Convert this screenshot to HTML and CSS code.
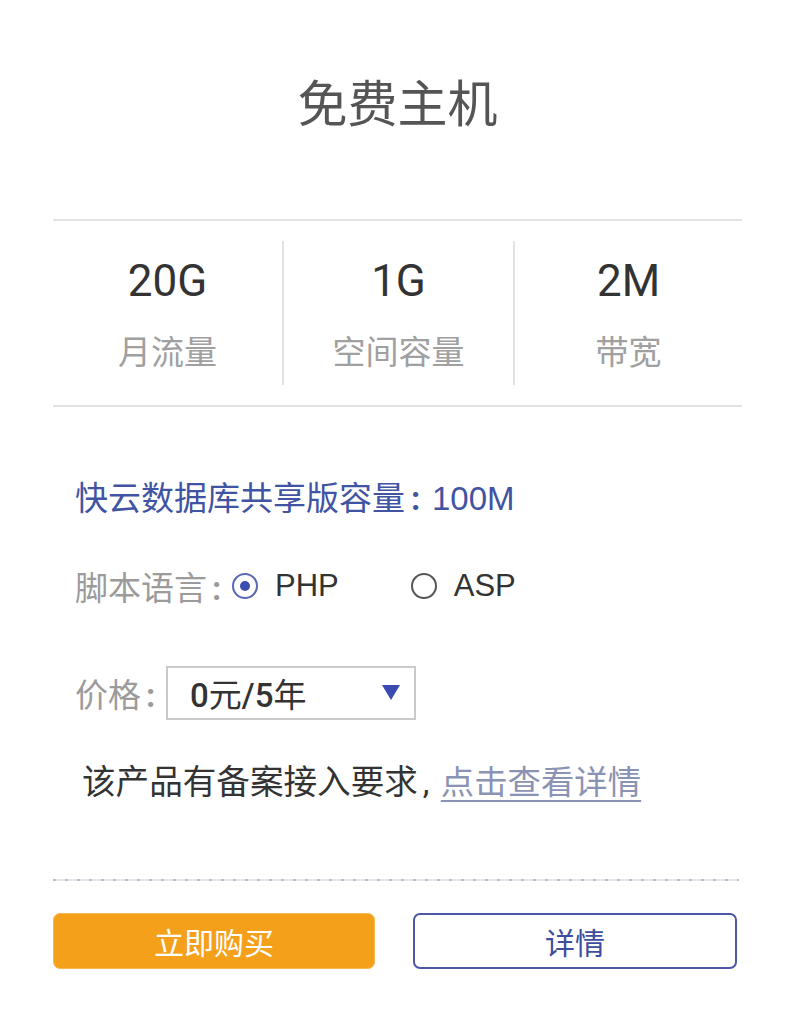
FILE: index.html
```html
<!DOCTYPE html>
<html lang="zh-CN">
<head>
<meta charset="utf-8">
<title>免费主机</title>
<link rel="stylesheet" href="styles.css">
</head>
<body>
<div class="card">
  <h1 class="title">免费主机</h1>
  <div class="stats">
    <div class="stat">
      <div class="stat-value">20G</div>
      <div class="stat-label">月流量</div>
    </div>
    <div class="stat">
      <div class="stat-value">1G</div>
      <div class="stat-label">空间容量</div>
    </div>
    <div class="stat">
      <div class="stat-value">2M</div>
      <div class="stat-label">带宽</div>
    </div>
  </div>
  <div class="db">快云数据库共享版容量<span class="colon">:</span><span class="latin">100M</span></div>
  <div class="row script-row">
    <span class="label">脚本语言<span class="colon">:</span></span>
    <span class="radio checked"></span>
    <span class="opt latin">PHP</span>
    <span class="radio second"></span>
    <span class="opt latin">ASP</span>
  </div>
  <div class="row price-row">
    <span class="label">价格<span class="colon">:</span></span>
    <div class="select">
      <span class="select-text"><span class="num">0</span>元<span class="num">/5</span>年</span>
      <span class="arrow"></span>
    </div>
  </div>
  <div class="notice">该产品有备案接入要求<span class="comma">,</span><a class="link" href="#">点击查看详情</a></div>
  <div class="dots"></div>
  <div class="actions">
    <button class="btn btn-buy">立即购买</button>
    <button class="btn btn-detail">详情</button>
  </div>
</div>
</body>
</html>
```
FILE: styles.css
```css
html, body {
  margin: 0;
  padding: 0;
  background: #fff;
}
body {
  font-family: Roboto, "Noto Sans CJK SC", sans-serif;
}
.card {
  margin-left: 53px;
  width: 689px;
}
.title {
  margin: 0;
  padding-top: 75px;
  height: 60px;
  line-height: 60px;
  font-size: 50px;
  font-weight: 400;
  color: #555;
  text-align: center;
}
.stats {
  margin-top: 84px;
  display: flex;
  border-top: 2px solid #e2e2e2;
  border-bottom: 2px solid #e2e2e2;
}
.stat {
  margin: 20px 0 20px;
  padding: 15px 0 10px;
  text-align: center;
}
.stat:first-child { flex: 0 0 229px; }
.stat:nth-child(2) { flex: 0 0 229px; }
.stat:nth-child(3) { flex: 1 1 0; }
.stat + .stat {
  border-left: 2px solid #e2e2e2;
}
.stat-value {
  height: 50px;
  line-height: 50px;
  font-size: 44px;
  color: #333;
}
.stat-label {
  margin-top: 25px;
  height: 44px;
  line-height: 44px;
  font-size: 33px;
  color: #a0a0a0;
}
.latin {
  font-family: "Liberation Sans", Arial, sans-serif;
}
.colon {
  display: inline-block;
  box-sizing: border-box;
  width: 27px;
  padding-left: 6px;
  font-weight: 700;
}
.row .colon {
  width: 25px;
  padding-left: 5px;
}
.comma {
  display: inline-block;
  box-sizing: border-box;
  width: 23px;
  padding-left: 5px;
}
.db {
  margin-top: 70px;
  padding-left: 22px;
  height: 44px;
  line-height: 44px;
  font-size: 33px;
  color: #4153a3;
}
.db .latin { font-size: 33px; }
.row {
  display: flex;
  align-items: center;
  padding-left: 22px;
}
.label {
  font-size: 33px;
  color: #9b9b9b;
}
.script-row {
  margin-top: 43px;
  height: 44px;
}
.radio {
  box-sizing: border-box;
  width: 26px;
  height: 26px;
  border-radius: 50%;
  border: 2px solid #555;
  display: flex;
  align-items: center;
  justify-content: center;
}
.radio.checked {
  border-color: #5a68b4;
}
.radio.checked::after {
  content: "";
  width: 10px;
  height: 10px;
  border-radius: 50%;
  background: #3b4db0;
}
.radio.second {
  margin-left: 72px;
}
.opt {
  margin-left: 17px;
  font-size: 31px;
  color: #333;
}
.price-row {
  margin-top: 58px;
  height: 53px;
}
.select {
  box-sizing: border-box;
  width: 250px;
  height: 54px;
  border: 2px solid #cacaca;
  display: flex;
  align-items: center;
  justify-content: space-between;
  padding: 0 14px 0 22px;
}
.select-text {
  font-size: 33px;
  color: #333;
}
.select-text .num {
  font-family: Roboto, sans-serif;
  font-weight: 500;
  color: #333;
}
.arrow {
  width: 0;
  height: 0;
  border-left: 9px solid transparent;
  border-right: 9px solid transparent;
  border-top: 15px solid #3a4ab0;
}
.notice {
  margin-top: 42px;
  padding-left: 29px;
  height: 44px;
  line-height: 44px;
  font-size: 33.6px;
  color: #333;
}
.link {
  font-size: 33.4px;
  color: #8a93b3;
  text-decoration: underline;
  text-underline-offset: 6px;
  text-decoration-thickness: 2px;
}
.dots {
  margin-top: 74px;
  width: 686px;
  height: 2px;
  background: repeating-linear-gradient(90deg, #b7bfcd 0 3px, #e4e6eb 3px 12px);
}
.actions {
  margin-top: 32px;
  display: flex;
  justify-content: space-between;
  width: 684px;
}
.btn {
  box-sizing: border-box;
  height: 56px;
  border-radius: 7px;
  font-family: "Noto Sans CJK SC", sans-serif;
  font-size: 30px;
  padding: 0;
  cursor: pointer;
}
.btn-buy {
  width: 322px;
  background: #f5a01a;
  border: 1px solid #f7b84e;
  color: #fff;
}
.btn-detail {
  width: 324px;
  background: #fff;
  border: 2px solid #4c58a6;
  color: #3d4ea0;
}
```
